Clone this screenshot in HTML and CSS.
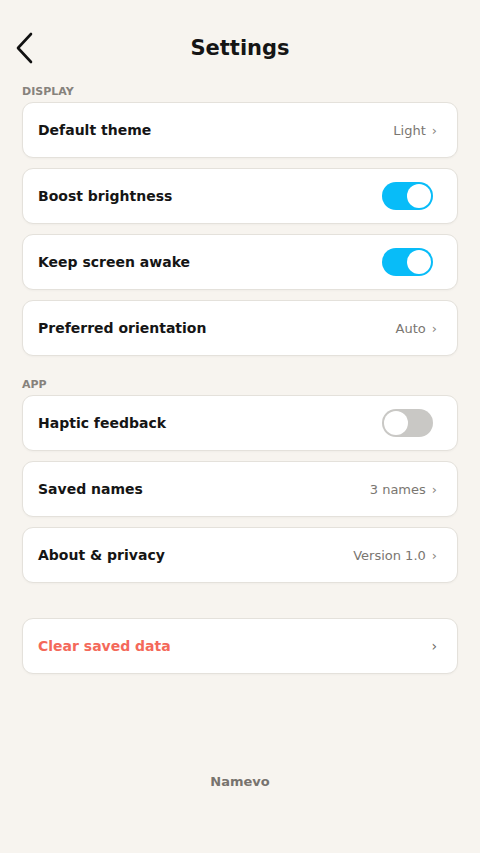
FILE: index.html
```html
<!DOCTYPE html>
<html lang="en">
<head>
<meta charset="utf-8">
<meta name="viewport" content="width=device-width, initial-scale=1">
<title>Settings</title>
<link rel="stylesheet" href="styles.css">
</head>
<body>
<div class="screen">
  <header class="topbar">
    <button class="back" aria-label="Back">
      <svg width="20" height="32" viewBox="0 0 20 32" aria-hidden="true">
        <path d="M16 2 L3 16 L16 30" fill="none" stroke="#111" stroke-width="2.6" stroke-linecap="round" stroke-linejoin="round"/>
      </svg>
    </button>
    <h1 class="title">Settings</h1>
    <span class="spacer"></span>
  </header>

  <section class="group">
    <div class="group-label">DISPLAY</div>
    <div class="list">
      <div class="row">
        <span class="row-label">Default theme</span>
        <span class="row-end"><span class="value">Light</span><span class="chev">›</span></span>
      </div>
      <div class="row">
        <span class="row-label">Boost brightness</span>
        <span class="toggle on"><span class="knob"></span></span>
      </div>
      <div class="row">
        <span class="row-label">Keep screen awake</span>
        <span class="toggle on"><span class="knob"></span></span>
      </div>
      <div class="row">
        <span class="row-label">Preferred orientation</span>
        <span class="row-end"><span class="value">Auto</span><span class="chev">›</span></span>
      </div>
    </div>
  </section>

  <section class="group">
    <div class="group-label">APP</div>
    <div class="list">
      <div class="row">
        <span class="row-label">Haptic feedback</span>
        <span class="toggle off"><span class="knob"></span></span>
      </div>
      <div class="row">
        <span class="row-label">Saved names</span>
        <span class="row-end"><span class="value">3 names</span><span class="chev">›</span></span>
      </div>
      <div class="row">
        <span class="row-label">About &amp; privacy</span>
        <span class="row-end"><span class="value">Version 1.0</span><span class="chev">›</span></span>
      </div>
    </div>
  </section>

  <section class="group danger-group">
    <div class="row">
      <span class="row-label danger">Clear saved data</span>
      <span class="row-end"><span class="chev chev-dark">›</span></span>
    </div>
  </section>

  <footer class="brand">Namevo</footer>
</div>
</body>
</html>
```

FILE: styles.css
```css
* {
  box-sizing: border-box;
}

html, body {
  margin: 0;
  padding: 0;
}

body {
  background: #f7f4ef;
  font-family: "DejaVu Sans", "Noto Sans", sans-serif;
  color: #151515;
  width: 480px;
  min-height: 853px;
}

.screen {
  display: flex;
  flex-direction: column;
  padding: 26px 22px 0 22px;
}

.topbar {
  display: grid;
  grid-template-columns: 1fr auto 1fr;
  align-items: center;
  height: 44px;
  margin: 0 -22px;
}

.back {
  justify-self: start;
  background: none;
  border: 0;
  padding: 0;
  margin: 0 0 0 15px;
  width: 20px;
  height: 32px;
  display: flex;
  cursor: pointer;
}

.title {
  margin: 0;
  font-size: 21px;
  font-weight: 700;
  line-height: 44px;
  color: #151515;
}

.group {
  display: flex;
  flex-direction: column;
  margin-top: 22px;
}

.topbar + .group {
  margin-top: 15px;
}

.group-label {
  font-size: 11px;
  font-weight: 700;
  line-height: 14px;
  color: #86827c;
  margin-bottom: 3px;
}

.list {
  display: flex;
  flex-direction: column;
  gap: 10px;
}

.row {
  display: flex;
  align-items: center;
  justify-content: space-between;
  height: 56px;
  background: #ffffff;
  border: 1px solid #e4e1db;
  border-radius: 11px;
  padding: 0 20px 0 15px;
  box-shadow: 0 1px 2px rgba(0, 0, 0, 0.03);
}

.row-label {
  font-size: 14px;
  font-weight: 700;
  color: #151515;
}

.row-label.danger {
  color: #f4695a;
}

.row-end {
  display: flex;
  align-items: center;
  gap: 6px;
}

.value {
  font-size: 13px;
  color: #7a7671;
}

.chev {
  font-size: 13px;
  color: #8a8680;
}

.chev-dark {
  color: #6e6a65;
  font-size: 14px;
}

.toggle {
  position: relative;
  width: 51px;
  height: 28px;
  border-radius: 14px;
  margin-right: 4px;
}

.toggle.on {
  background: #08bcf8;
}

.toggle.off {
  background: #c9c8c5;
}

.knob {
  position: absolute;
  top: 2px;
  width: 24px;
  height: 24px;
  border-radius: 50%;
  background: #ffffff;
}

.toggle.on .knob {
  right: 2px;
}

.toggle.off .knob {
  left: 2px;
}

.danger-group {
  margin-top: 35px;
}

.brand {
  margin-top: 100px;
  text-align: center;
  font-size: 13px;
  font-weight: 700;
  line-height: 16px;
  color: #77736e;
}
```
